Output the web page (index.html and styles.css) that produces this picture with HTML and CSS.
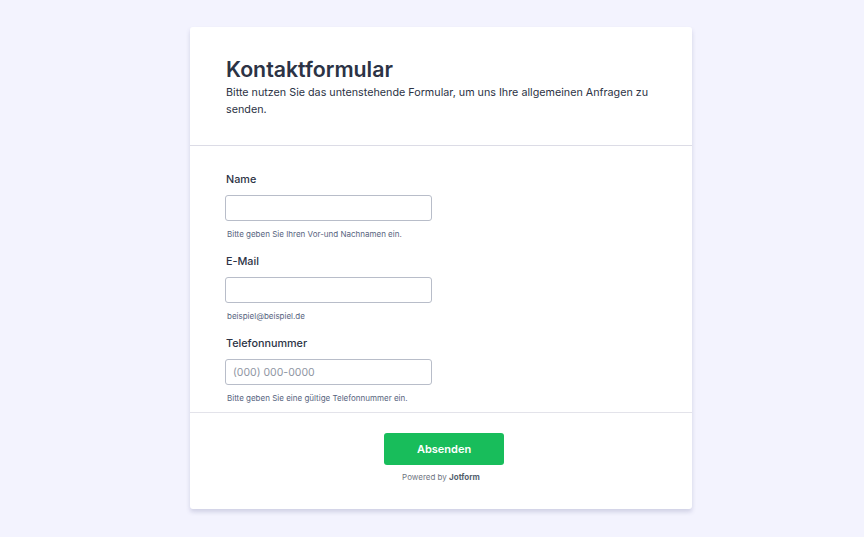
FILE: index.html
```html
<!DOCTYPE html>
<html lang="de">
<head>
<meta charset="utf-8">
<title>Kontaktformular</title>
<link rel="stylesheet" href="styles.css">
</head>
<body>
<main class="form-card">
  <header class="form-header">
    <h1 class="form-title">Kontaktformular</h1>
    <p class="form-subtitle">Bitte nutzen Sie das untenstehende Formular, um uns Ihre allgemeinen Anfragen zu senden.</p>
  </header>
  <section class="form-body">
    <div class="field">
      <label class="field-label" for="name">Name</label>
      <input class="field-input" id="name" type="text">
      <span class="field-hint">Bitte geben Sie Ihren Vor-und Nachnamen ein.</span>
    </div>
    <div class="field">
      <label class="field-label" for="email">E-Mail</label>
      <input class="field-input" id="email" type="text">
      <span class="field-hint">beispiel@beispiel.de</span>
    </div>
    <div class="field">
      <label class="field-label" for="phone">Telefonnummer</label>
      <input class="field-input" id="phone" type="text" placeholder="(000) 000-0000">
      <span class="field-hint">Bitte geben Sie eine gültige Telefonnummer ein.</span>
    </div>
  </section>
  <footer class="form-footer">
    <button class="submit-btn" type="button">Absenden</button>
    <p class="powered">Powered by <strong>Jotform</strong></p>
  </footer>
</main>
</body>
</html>
```

FILE: styles.css
```css
html, body {
  margin: 0;
  padding: 0;
}
body {
  background: #f3f3fe;
  font-family: Inter, "Noto Sans", sans-serif;
  color: #2c3345;
  padding-top: 27px;
  min-height: 537px;
  box-sizing: border-box;
}
.form-card {
  width: 502px;
  margin-left: 190px;
  background: #fff;
  border-radius: 3px;
  box-shadow: 0 3px 4px rgba(86, 92, 140, 0.22);
}
.form-header {
  padding: 27px 36px 27px 36px;
  border-bottom: 1px solid #dcdce6;
}
.form-title {
  margin: 0;
  font-size: 21.3px;
  font-weight: 600;
  line-height: 30px;
  color: #2c3345;
}
.form-subtitle {
  margin: 0;
  font-size: 10.75px;
  line-height: 17px;
  color: #2c3345;
}
.form-body {
  padding: 24px 36px 8px 35px;
  border-bottom: 1px solid #e3e3ea;
  display: flex;
  flex-direction: column;
  gap: 12px;
}
.field {
  display: flex;
  flex-direction: column;
  align-items: flex-start;
}
.field-label {
  font-size: 10.8px;
  line-height: 18px;
  font-weight: 500;
  padding-top: 1px;
  margin-left: 1px;
  margin-bottom: 6px;
  color: #2c3345;
}
.field-input {
  width: 207px;
  height: 26px;
  box-sizing: border-box;
  border: 1px solid #b8bdc9;
  border-radius: 3px;
  padding: 0 7px;
  font-family: inherit;
  font-size: 10.5px;
  color: #2c3345;
  background: #fff;
}
.field-input::placeholder {
  color: #8f96a3;
}
.field-hint {
  font-size: 8px;
  line-height: 12px;
  margin-top: 7px;
  margin-left: 2px;
  color: #57647e;
}
.form-footer {
  padding: 20px 0 26px;
  display: flex;
  flex-direction: column;
  align-items: center;
}
.submit-btn {
  width: 120px;
  height: 32px;
  margin-left: 6px;
  border: none;
  border-radius: 3px;
  background: #18bd5b;
  color: #fff;
  font-family: inherit;
  font-size: 11px;
  font-weight: 600;
}
.powered {
  margin: 6px 0 0 0;
  font-size: 8px;
  line-height: 12px;
  color: #6f7682;
}
.powered strong {
  color: #555f6e;
  font-weight: 700;
}
```
